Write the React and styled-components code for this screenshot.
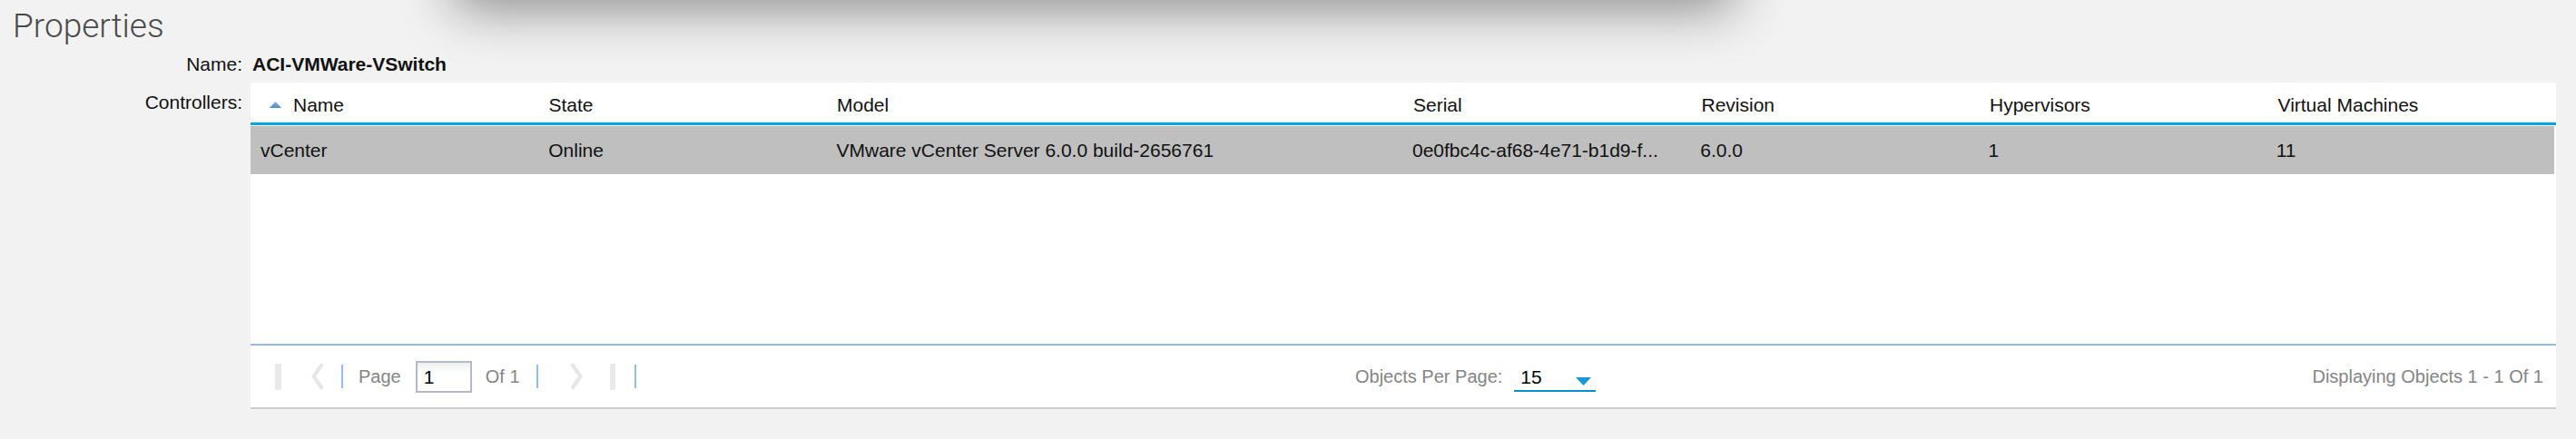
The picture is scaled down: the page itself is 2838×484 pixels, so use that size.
import React from "react";
import styled, { createGlobalStyle } from "styled-components";

const GlobalStyle = createGlobalStyle`
	html, body {
		margin: 0;
		padding: 0;
		background: #f2f2f2;
	}
	body {
		font-family: "Liberation Sans", Arial, sans-serif;
		color: #111;
		overflow: hidden;
	}
`;

const Page = styled.div`
	position: relative;
	width: 2838px;
	height: 484px;
	background: #f2f2f2;
	overflow: hidden;
`;

const TopShadow = styled.div`
	position: absolute;
	top: -120px;
	left: 500px;
	width: 1410px;
	height: 120px;
	border-radius: 12px;
	background: #f2f2f2;
	box-shadow: 0 8px 60px rgba(0, 0, 0, 0.45);
`;

const Title = styled.h1`
	margin: 0;
	padding: 9px 0 0 14px;
	font-family: "Roboto", "Liberation Sans", sans-serif;
	font-weight: 300;
	font-size: 37px;
	line-height: 40px;
	color: #4a4a4a;
`;

const Form = styled.div`
	display: grid;
	grid-template-columns: 267px 1fr;
	column-gap: 9px;
	row-gap: 8px;
	margin-top: 10px;
	padding-right: 22px;
`;

const Label = styled.div`
	text-align: right;
	font-size: 21px;
	line-height: 24px;
	color: #111;
	padding-top: ${(p) => p.$top || 0}px;
`;

const Value = styled.div`
	font-size: 21px;
	line-height: 24px;
	font-weight: 700;
	color: #111;
	padding-left: 2px;
`;

const Grid = styled.div`
	background: #fff;
	border-bottom: 2px solid #cccccc;
`;

const Cols = `
	display: grid;
	grid-template-columns: 1fr 1fr 2fr 1fr 1fr 1fr 1fr;
`;

const HeaderRow = styled.div`
	${Cols}
	height: 44px;
	align-items: center;
	border-bottom: 3px solid #00a6e2;
`;

const HeaderCell = styled.div`
	display: flex;
	align-items: center;
	padding-left: 11px;
	font-size: 21px;
	padding-top: 5px;
	color: #111;
`;

const SortIcon = styled.svg`
	width: 13px;
	height: 7px;
	margin: 0 13px 0 10px;
`;

const Body = styled.div`
	height: 240px;
	padding-top: 1px;
	padding-right: 2px;
`;

const DataRow = styled.div`
	${Cols}
	height: 53px;
	align-items: center;
	background: ${(p) => (p.$selected ? "#bfbfbf" : "transparent")};
`;

const Cell = styled.div`
	padding: 0 11px;
	font-size: 21px;
	color: #111;
	white-space: nowrap;
	overflow: hidden;
	text-overflow: ellipsis;
`;

const Footer = styled.div`
	display: grid;
	grid-template-columns: 1217px auto 1fr;
	align-items: center;
	height: 68px;
	border-top: 2px solid #94b9e8;
	font-size: 20px;
	color: #858585;
`;

const Pager = styled.div`
	display: flex;
	align-items: center;
	padding-left: 27px;
`;

const PagerBar = styled.div`
	width: ${(p) => p.$w || 7}px;
	height: 29px;
	background: #e9e9e9;
	margin-left: ${(p) => p.$ml || 0}px;
`;

const Chevron = styled.svg`
	width: 16px;
	height: 30px;
	margin-left: ${(p) => p.$ml || 0}px;
`;

const Sep = styled.div`
	width: 2px;
	height: 26px;
	background: #93bdf0;
	margin-left: ${(p) => p.$ml || 0}px;
`;

const PagerText = styled.span`
	margin-left: ${(p) => p.$ml || 0}px;
	line-height: 24px;
`;

const PageInput = styled.div`
	box-sizing: border-box;
	width: 62px;
	height: 35px;
	margin-left: 16px;
	border: 2px solid #b6b9cb;
	background: linear-gradient(#eef0f0, #ffffff 40%);
	color: #000;
	font-size: 21px;
	line-height: 31px;
	padding-left: 7px;
`;

const PerPage = styled.div`
	display: flex;
	align-items: center;
`;

const Select = styled.div`
	box-sizing: border-box;
	display: flex;
	align-items: center;
	justify-content: space-between;
	width: 90px;
	height: 34px;
	margin-left: 13px;
	padding: 4px 5px 0 7px;
	border-bottom: 2px solid #0a8fd0;
	color: #000;
	font-size: 21px;
`;

const Caret = styled.svg`
	width: 17px;
	height: 9px;
	margin-top: 8px;
`;

const Displaying = styled.div`
	text-align: right;
	padding-right: 14px;
`;

const columns = ["Name", "State", "Model", "Serial", "Revision", "Hypervisors", "Virtual Machines"];

const rows = [
	["vCenter", "Online", "VMware vCenter Server 6.0.0 build-2656761", "0e0fbc4c-af68-4e71-b1d9-f...", "6.0.0", "1", "11"],
];

const LeftChevron = ({ ml }) => (
	<Chevron $ml={ml} viewBox="0 0 16 30">
		<polyline points="13,1.5 3.5,15 13,28.5" fill="none" stroke="#e6e6e6" strokeWidth="4" />
	</Chevron>
);

const RightChevron = ({ ml }) => (
	<Chevron $ml={ml} viewBox="0 0 16 30">
		<polyline points="3,1.5 12.5,15 3,28.5" fill="none" stroke="#e6e6e6" strokeWidth="4" />
	</Chevron>
);

const App = () => {
	return (
		<Page>
			<GlobalStyle />
			<TopShadow />
			<Title>Properties</Title>
			<Form>
				<Label>Name:</Label>
				<Value>ACI-VMWare-VSwitch</Value>
				<Label $top={10}>Controllers:</Label>
				<Grid>
					<HeaderRow>
						{columns.map((c, i) => (
							<HeaderCell key={c}>
								{i === 0 && (
									<SortIcon viewBox="0 0 13 7">
										<defs>
											<linearGradient id="sortg" x1="0" y1="0" x2="0" y2="1">
												<stop offset="0" stopColor="#8fb2e4" />
												<stop offset="1" stopColor="#4f86cf" />
											</linearGradient>
										</defs>
										<polygon points="6.5,0 13,7 0,7" fill="url(#sortg)" />
									</SortIcon>
								)}
								{c}
							</HeaderCell>
						))}
					</HeaderRow>
					<Body>
						{rows.map((r) => (
							<DataRow key={r[0]} $selected>
								{r.map((v, i) => (
									<Cell key={i}>{v}</Cell>
								))}
							</DataRow>
						))}
					</Body>
					<Footer>
						<Pager>
							<PagerBar />
							<LeftChevron ml={32} />
							<Sep $ml={18} />
							<PagerText $ml={17}>Page</PagerText>
							<PageInput>1</PageInput>
							<PagerText $ml={15}>Of 1</PagerText>
							<Sep $ml={18} />
							<RightChevron ml={34} />
							<PagerBar $ml={29} $w={6} />
							<Sep $ml={21} />
						</Pager>
						<PerPage>
							<span>Objects Per Page:</span>
							<Select>
								<span>15</span>
								<Caret viewBox="0 0 17 9">
									<polygon points="0,0 17,0 8.5,9" fill="#1598d8" />
								</Caret>
							</Select>
						</PerPage>
						<Displaying>Displaying Objects 1 - 1 Of 1</Displaying>
					</Footer>
				</Grid>
			</Form>
		</Page>
	);
};

export default App;
